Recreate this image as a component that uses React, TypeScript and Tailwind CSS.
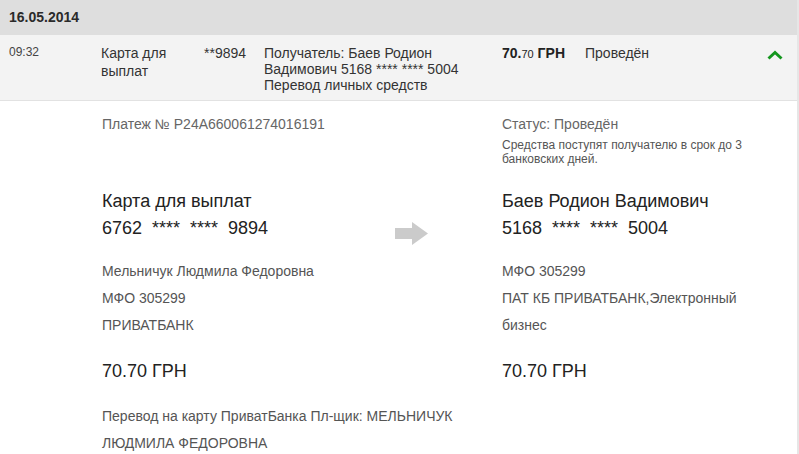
import React from "react";

const font = { fontFamily: '"Liberation Sans", Arial, sans-serif' };

function Arrow() {
  return (
    <svg width="34" height="24" viewBox="0 0 34 24" className="block">
      <polygon points="0,6 17,6 17,0 33,11.5 17,23 17,17 0,17" fill="#cbcbcb" />
    </svg>
  );
}

function Chevron() {
  return (
    <svg width="16" height="10" viewBox="0 0 16 10" className="block">
      <polyline points="1.5,8.5 8,2.5 14.5,8.5" fill="none" stroke="#14961e" strokeWidth="3" />
    </svg>
  );
}

export default function App() {
  return (
    <div className="flex w-[799px] h-[454px] overflow-hidden bg-white" style={font}>
      <div className="w-[797px] flex flex-col">
        <div className="h-[35px] shrink-0 bg-[#dedede] pl-[9px] flex items-center text-[14px] font-bold text-[#2a2a2a]">
          16.05.2014
        </div>
        <div className="h-[66px] shrink-0 bg-[#f3f3f3] border-b border-[#e2e2e2] flex pl-[9px] pt-[9px] text-[14px] text-[#333]">
          <div className="w-[92px] text-[12px] leading-[16px] text-[#444]">09:32</div>
          <div className="w-[103px] leading-[18px]">
            Карта для
            <br />
            выплат
          </div>
          <div className="w-[60px] leading-[18px]">**9894</div>
          <div className="w-[238px] leading-[16px] whitespace-nowrap pt-px">
            Получатель: Баев Родион
            <br />
            Вадимович 5168 **** **** 5004
            <br />
            Перевод личных средств
          </div>
          <div className="w-[83px] leading-[18px] text-[#222] whitespace-nowrap">
            <span className="font-bold">70.</span>
            <span className="text-[11px]">70</span>
            <span className="font-bold"> ГРН</span>
          </div>
          <div className="w-[182px] leading-[18px]">Проведён</div>
          <div className="pt-[6px]">
            <Chevron />
          </div>
        </div>
        <div className="shrink-0 grid grid-cols-[502px_1fr] pt-[13px] text-[14px] text-[#555]">
          <div className="pl-[102px] leading-[20px] text-[#666]">Платеж № P24A660061274016191</div>
          <div className="w-[250px]">
            <div className="leading-[20px] text-[#666]">Статус: Проведён</div>
            <div className="mt-[4px] text-[12px] leading-[14px] text-[#555]">
              Средства поступят получателю в срок до 3 банковских дней.
            </div>
          </div>

          <div className="pl-[102px] mt-[22px] flex items-start">
            <div className="w-[293px] text-[18px] leading-[27px] text-[#222]">
              <div>Карта для выплат</div>
              <div className="whitespace-pre">6762  ****  ****  9894</div>
            </div>
            <div className="pt-[34px]">
              <Arrow />
            </div>
          </div>
          <div className="mt-[22px] text-[18px] leading-[27px] text-[#222]">
            <div>Баев Родион Вадимович</div>
            <div className="whitespace-pre">5168  ****  ****  5004</div>
          </div>

          <div className="pl-[102px] mt-[12px] leading-[27px]">
            <div>Мельничук Людмила Федоровна</div>
            <div>МФО 305299</div>
            <div>ПРИВАТБАНК</div>
          </div>
          <div className="mt-[12px] leading-[27px] w-[250px]">
            <div>МФО 305299</div>
            <div>ПАТ КБ ПРИВАТБАНК,Электронный бизнес</div>
          </div>

          <div className="pl-[102px] mt-[19px] text-[18px] leading-[27px] text-[#222]">70.70 ГРН</div>
          <div className="mt-[19px] text-[18px] leading-[27px] text-[#222]">70.70 ГРН</div>

          <div className="pl-[102px] mt-[18px] leading-[27px] whitespace-nowrap">
            Перевод на карту ПриватБанка Пл-щик: МЕЛЬНИЧУК
            <br />
            ЛЮДМИЛА ФЕДОРОВНА
          </div>
          <div />
        </div>
      </div>
      <div className="w-[2px] shrink-0 bg-[#e6e6e6]" />
    </div>
  );
}
